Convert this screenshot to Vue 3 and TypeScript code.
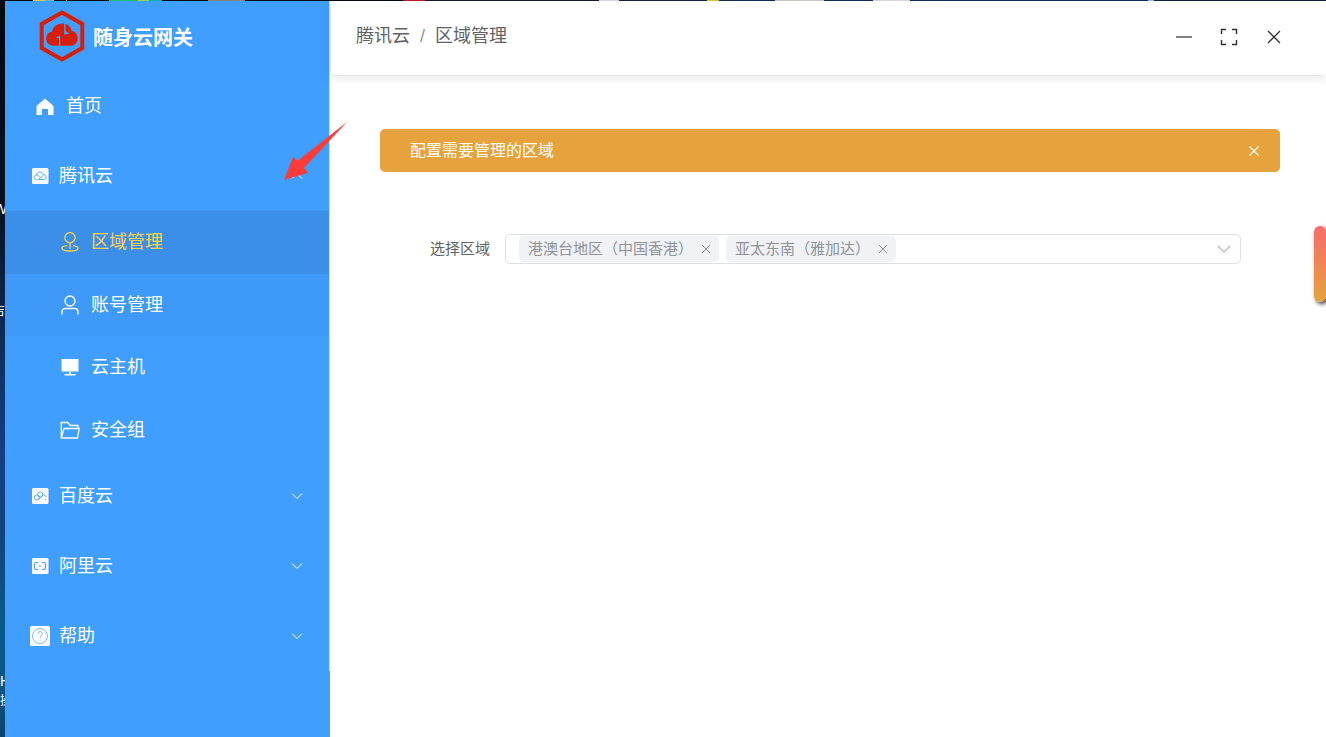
<script setup lang="ts">
import { ref } from 'vue'

type IconName = 'place' | 'user' | 'monitor' | 'folder' | 'tencent' | 'baidu' | 'aliyun' | 'help'
interface SubItem { label: string; icon: IconName }
interface Group { label: string; icon: IconName; children: SubItem[] }

const groups: Group[] = [
  {
    label: '腾讯云',
    icon: 'tencent',
    children: [
      { label: '区域管理', icon: 'place' },
      { label: '账号管理', icon: 'user' },
      { label: '云主机', icon: 'monitor' },
      { label: '安全组', icon: 'folder' },
    ],
  },
  { label: '百度云', icon: 'baidu', children: [] },
  { label: '阿里云', icon: 'aliyun', children: [] },
  { label: '帮助', icon: 'help', children: [] },
]
const active = ref('区域管理')
const opened = ref('腾讯云')
const alertVisible = ref(true)
const regions = ref<string[]>(['港澳台地区（中国香港）', '亚太东南（雅加达）'])

function toggle(label: string): void {
  opened.value = opened.value === label ? '' : label
}
function removeRegion(name: string): void {
  regions.value = regions.value.filter((r) => r !== name)
}
</script>

<template>
  <div class="desktop">
    <div class="desk-top"></div>
    <div class="desk-side" aria-hidden="true">
      <span class="desk-text w">W</span>
      <span class="desk-text a">吉</span>
      <span class="desk-text h">H</span>
      <span class="desk-text c">操</span>
    </div>

    <aside class="sidebar">
      <div class="brand">
        <svg class="brand-logo" viewBox="0 0 46 52">
          <path d="M23 2.500 43.300 14v24L23 49.500 2.700 38V14z" fill="none" stroke="#d81e06" stroke-width="4" />
          <path d="M15 35.700C5 35.700 5 22.500 13 21.700 15 11 31 11 32.500 20.700 41 22 41 35.700 31.500 35.700z" fill="#d81e06" />
          <path d="M25.800 13v9M20.600 36.500V27.500" fill="none" stroke="#409eff" stroke-width="1.300" />
          <path d="M25.200 21v4l5-1.500-3.500-2.500zM21.200 28.500v-3l-4.500 2 2.500 1z" fill="#409eff" />
        </svg>
        <h1>随身云网关</h1>
      </div>

      <nav class="menu">
        <a class="row home" href="#home">
          <svg class="icon-home" viewBox="0 0 18 17"><path d="M9 .500 17.500 8v9H12v-6H6v6H.500V8z" fill="#fff" /></svg>
          <span>首页</span>
        </a>
        <div v-for="g in groups" :key="g.label" class="group">
          <button class="row title" type="button" :aria-expanded="opened === g.label" @click="toggle(g.label)">
            <svg v-if="g.icon !== 'help'" class="icon-group" viewBox="0 0 20 20">
              <rect x="2" y="2" width="16.500" height="16" rx="1.500" fill="#fff" />
              <g fill="none" stroke="#409eff" stroke-width=".9">
                <path v-if="g.icon === 'tencent'" d="M7 13.500c-4 0-3.500-4.500-.500-4.500C7 5 13 5 13.500 9c3.500 0 3.500 4.500 0 4.500H8.500l4.500-4M6.500 9c1.500 0 2.500 1 3.500 2.200" />
                <g v-else-if="g.icon === 'baidu'">
                  <circle cx="6.800" cy="11.500" r="2.500" /><circle cx="10.200" cy="8.500" r="2.600" />
                  <path d="M8.500 13.500l4-4c2-1.500 3.800.500 3.200 2M15 13.500h.8" />
                </g>
                <path v-else d="M8 6.500H6c-1.300 0-1.500.700-1.500 2v3c0 1.300.2 2 1.500 2h2M12 6.500h2c1.300 0 1.500.700 1.500 2v3c0 1.300-.2 2-1.500 2h-2M9 10h2" stroke-width="1.100" />
              </g>
            </svg>
            <svg v-else class="icon-group" viewBox="0 0 20 20">
              <rect width="20" height="20" rx="1.500" fill="#fff" />
              <g fill="none" stroke="#409eff" stroke-width=".7">
                <circle cx="10" cy="10" r="7.500" />
                <path d="M7.800 8c0-3.200 4.600-3 4.600-.2 0 1.900-2.300 2-2.300 4.200M10.100 13.400v1.300" />
              </g>
            </svg>
            <span>{{ g.label }}</span>
            <svg class="chevron" :class="{ up: opened === g.label }" viewBox="0 0 12 12"><path d="M1 3.500l5 5 5-5" fill="none" stroke="#fff" stroke-width="1" /></svg>
          </button>
          <div v-if="opened === g.label && g.children.length" class="submenu">
            <a
              v-for="s in g.children"
              :key="s.label"
              class="sub"
              :class="{ active: active === s.label, tinted: s.icon === 'user' }"
              href="#"
              @click.prevent="active = s.label"
            >
              <svg class="icon-sub" viewBox="0 0 20 20" fill="none" stroke="currentColor" stroke-width="1.300">
                <g v-if="s.icon === 'place'">
                  <circle cx="10" cy="5.700" r="5.100" />
                  <path d="M10 11v6M7 13.700c-3 .4-5 1.300-5 2.500 0 1.600 3.400 2.800 8 2.800s8-1.200 8-2.800c0-1.200-2-2.100-5-2.500" />
                </g>
                <g v-else-if="s.icon === 'user'">
                  <circle cx="10" cy="6" r="5" />
                  <path d="M2 19.500v-2.700c0-2 1.200-3.300 3.300-3.300h9.400c2.100 0 3.300 1.300 3.300 3.300v2.700" />
                </g>
                <path v-else-if="s.icon === 'monitor'" d="M1.500 2h17v12.500h-17zM9 15h2v2h4.500v1.500h-11V17H9z" fill="currentColor" stroke="none" />
                <path v-else d="M1.300 18V2.500H7.500L10.500 5.500h7.500V8M1.300 18 4 8.500h15.200L17.500 18z" />
              </svg>
              <span>{{ s.label }}</span>
            </a>
          </div>
        </div>
      </nav>
    </aside>

    <main class="main">
      <header class="header">
        <nav class="crumbs">
          <a href="#tencent">腾讯云</a><i>/</i><span>区域管理</span>
        </nav>
        <div class="window-tools">
          <button type="button" aria-label="最小化"><svg viewBox="0 0 18 18"><path d="M1 9h16" stroke="#808080" stroke-width="2" /></svg></button>
          <button type="button" aria-label="全屏"><svg viewBox="0 0 18 18"><path d="M1.500 6V1.500H6M12 1.500h4.500V6M16.500 12v4.500H12M6 16.500H1.500V12" fill="none" stroke="#303133" stroke-width="1.400" /></svg></button>
          <button type="button" aria-label="关闭"><svg viewBox="0 0 18 18"><path d="M3 3l12 12M15 3L3 15" stroke="#303133" stroke-width="1.300" /></svg></button>
        </div>
      </header>

      <section class="content">
        <div v-if="alertVisible" class="alert" role="alert">
          <span>配置需要管理的区域</span>
          <button type="button" aria-label="关闭提示" @click="alertVisible = false">
            <svg viewBox="0 0 10 10"><path d="M.500.500l9 9M9.500.500l-9 9" stroke="#fff" stroke-width="1.100" /></svg>
          </button>
        </div>
        <form class="form" @submit.prevent>
          <label for="region">选择区域</label>
          <div class="select-box">
            <span v-for="r in regions" :key="r" class="tag">
              {{ r }}
              <button type="button" :aria-label="'移除' + r" @click="removeRegion(r)">
                <svg viewBox="0 0 10 10"><path d="M1 1l8 8M9 1L1 9" stroke="#909399" stroke-width="1" /></svg>
              </button>
            </span>
            <select id="region"></select>
            <svg class="select-arrow" viewBox="0 0 14 14"><path d="M1 4l6 6 6-6" fill="none" stroke="#b4b8bf" stroke-width="1.200" /></svg>
          </div>
        </form>
      </section>
      <button class="drawer-handle" type="button" aria-label="展开面板"></button>
    </main>

    <svg class="pointer" viewBox="0 0 64 60" aria-hidden="true"><path d="M0 58 9 35 13.500 38.700 63 0 20 46l4.300 4.700z" fill="#fd3b38" /></svg>
  </div>
</template>

<style>
body {
  margin: 0;
  background: #fff;
}
</style>

<style scoped>
.desktop {
  position: relative;
  display: grid;
  grid-template-columns: 5px 325px minmax(0, 1fr);
  grid-template-rows: 1px 1fr;
  min-height: 100vh;
  overflow: hidden;
  font-family: "Liberation Sans", "Noto Sans CJK SC", sans-serif;
  line-height: 24px;
  color: #606266;
}
.desktop * {
  box-sizing: border-box;
}
button {
  padding: 0;
  border: 0;
  background: none;
  font: inherit;
  color: inherit;
  cursor: pointer;
}
a {
  color: inherit;
  text-decoration: none;
}
svg {
  display: block;
  flex: none;
}
.desk-top {
  grid-column: 1 / -1;
  background: linear-gradient(90deg, #050a12 0 33px, #d8c85a 33px 45px, #59b8d0 45px 54px, #050a12 54px 66px, #f0a020 66px 67px, #050a12 67px 109px, #20c070 109px 138px, #90d850 138px 149px, #00b0c8 149px 162px, #050a12 162px 208px, #8c8080 208px 245px, #060b16 245px 403px, #c01820 403px 425px, #101c34 425px 599px, #dcdcdc 599px 619px, #10264a 619px 707px, #d8c840 707px 719px, #12305a 719px 775px, #d0ccc8 775px 824px, #12305a 824px 873px, #dcdcdc 873px 910px, #12305a 910px 1148px, #a0c0d8 1148px 1154px, #0c2444 1154px);
}
.desk-side {
  position: relative;
  overflow: hidden;
  background: linear-gradient(#05090f, #061222 28%, #0d3060 48%, #143e86 61%, #10437c 72%, #075c8c 86%, #0b5384 94%, #08446c);
}
.desk-text {
  position: absolute;
  left: 0;
  font-size: 14px;
  line-height: 16px;
  color: #fff;
}
.desk-text.w { left: auto; right: -2px; top: 200px; }
.desk-text.a { left: auto; right: 0; top: 302px; font-size: 12px; }
.desk-text.h { top: 672px; }
.desk-text.c { top: 692px; font-size: 12px; }

.sidebar {
  background: #409eff;
  color: #fff;
  font-size: 18px;
}
.brand {
  display: flex;
  align-items: center;
  gap: 8px;
  height: 70px;
  padding-left: 34px;
  border-right: 1px solid #dcdfe6;
}
.brand-logo {
  width: 46px;
  height: 52px;
}
.brand h1 {
  margin: 0;
  padding-top: 4px;
  font-size: 20px;
  line-height: 28px;
  font-weight: 700;
}
.menu {
  border-right: 1px solid #dcdfe6;
}
.row {
  display: flex;
  align-items: center;
  width: 100%;
  height: 70px;
}
.home {
  gap: 12px;
  padding-left: 31px;
}
.icon-home {
  width: 18px;
  height: 17px;
}
.title {
  gap: 9px;
  padding: 0 26px 0 25px;
}
.icon-group {
  width: 20px;
  height: 20px;
}
.chevron {
  width: 12px;
  height: 12px;
  margin-left: auto;
}
.chevron.up {
  transform: rotate(180deg);
}
.submenu {
  display: grid;
  grid-template-rows: repeat(4, 1fr);
  height: 250px;
}
.sub {
  display: flex;
  align-items: center;
  gap: 11px;
  padding-left: 55px;
}
.sub.tinted {
  background: #3f99f8;
}
.sub.active {
  background: #3b8fe9;
  color: #ffd04b;
}
.icon-sub {
  width: 20px;
  height: 20px;
}

.main {
  position: relative;
  min-width: 0;
  background: #fff;
}
.header {
  display: flex;
  justify-content: space-between;
  align-items: center;
  height: 75px;
  padding: 0 43px 0 25px;
  border-bottom: 1px solid #e4e7ed;
  border-left: 1px solid #e4e7ed;
  border-radius: 4px;
  box-shadow: 0 2px 12px rgba(0, 0, 0, 0.1);
}
.crumbs {
  display: flex;
  align-items: center;
  padding-bottom: 5px;
  font-size: 18px;
  line-height: 26px;
}
.crumbs i {
  margin: 0 10px;
  font-style: normal;
  color: #909399;
}
.window-tools {
  display: flex;
  gap: 27px;
  padding-bottom: 2px;
}
.window-tools svg {
  width: 18px;
  height: 18px;
}
.content {
  padding: 53px 46px 0 50px;
}
.alert {
  display: flex;
  align-items: center;
  justify-content: space-between;
  height: 43px;
  padding: 0 21px 0 30px;
  border-radius: 5px;
  background: #e6a23c;
  color: #fff;
  font-size: 16px;
}
.alert svg {
  width: 10px;
  height: 10px;
}
.form {
  display: flex;
  align-items: center;
  gap: 15px;
  margin-top: 62px;
  padding: 0 39px 0 50px;
  font-size: 15px;
}
.select-box {
  display: flex;
  flex: 1;
  align-items: center;
  gap: 7px;
  min-width: 0;
  height: 30px;
  padding: 0 9px 0 13px;
  border: 1px solid #dcdfe6;
  border-radius: 5px;
}
.tag {
  display: flex;
  align-items: center;
  gap: 8px;
  height: 26px;
  padding: 0 8px 0 9px;
  border-radius: 5px;
  background: #f0f2f5;
  color: #909399;
  white-space: nowrap;
}
.tag svg {
  width: 10px;
  height: 10px;
}
.select-box select {
  flex: 1;
  min-width: 0;
  height: 24px;
  border: 0;
  background: none;
  appearance: none;
  outline: none;
}
.select-arrow {
  width: 14px;
  height: 14px;
}
.drawer-handle {
  position: absolute;
  top: 225px;
  right: 0;
  width: 12px;
  height: 76px;
  border-radius: 6px;
  background: linear-gradient(#f56c6c, #e6a23c);
  box-shadow: 2px 2px 4px rgba(0, 0, 0, 0.8);
}
.pointer {
  position: absolute;
  left: 284px;
  top: 122px;
  width: 64px;
  height: 60px;
}
</style>
